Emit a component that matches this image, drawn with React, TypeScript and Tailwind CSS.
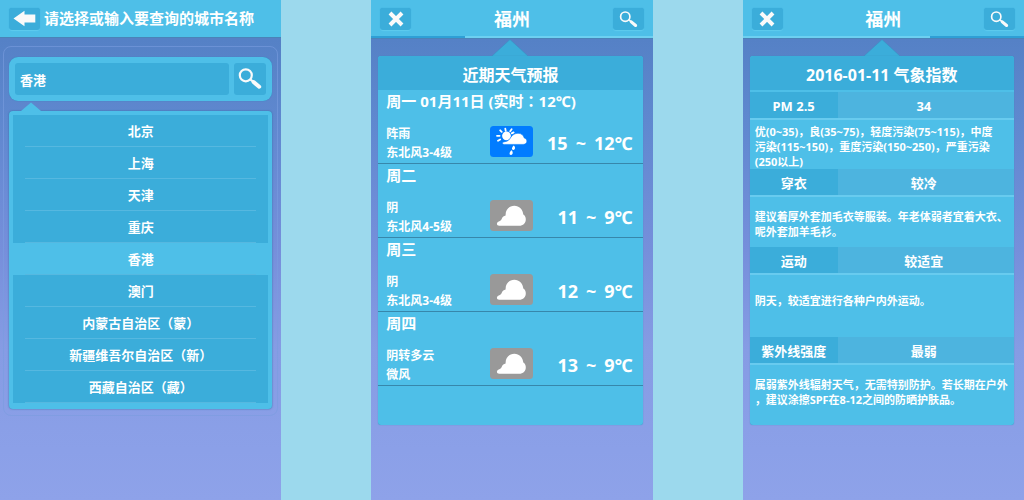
import type { ReactNode } from "react";

const cities = [
  "北京",
  "上海",
  "天津",
  "重庆",
  "香港",
  "澳门",
  "内蒙古自治区（蒙）",
  "新疆维吾尔自治区（新）",
  "西藏自治区（藏）",
];

type Day = { title: string; weather: string; wind: string; high: string; low: string; rain?: boolean };

const days: Day[] = [
  { title: "周一 01月11日 (实时：12℃)", weather: "阵雨", wind: "东北风3-4级", high: "15", low: "12℃", rain: true },
  { title: "周二", weather: "阴", wind: "东北风4-5级", high: "11", low: "9℃" },
  { title: "周三", weather: "阴", wind: "东北风3-4级", high: "12", low: "9℃" },
  { title: "周四", weather: "阴转多云", wind: "微风", high: "13", low: "9℃" },
];

type Index = { label: string; value: string; lines: string[]; space: string };

const indices: Index[] = [
  {
    label: "PM 2.5",
    value: "34",
    lines: ["优(0~35)，良(35~75)，轻度污染(75~115)，中度", "污染(115~150)，重度污染(150~250)，严重污染", "(250以上)"],
    space: "pt-1",
  },
  {
    label: "穿衣",
    value: "较冷",
    lines: ["建议着厚外套加毛衣等服装。年老体弱者宜着大衣、", "呢外套加羊毛衫。"],
    space: "pt-3 pb-2",
  },
  { label: "运动", value: "较适宜", lines: ["阴天，较适宜进行各种户内外运动。"], space: "pt-[18px] pb-[29px]" },
  {
    label: "紫外线强度",
    value: "最弱",
    lines: ["属弱紫外线辐射天气，无需特别防护。若长期在户外", "，建议涂擦SPF在8-12之间的防晒护肤品。"],
    space: "pt-3 pb-[18px]",
  },
];

/* Sets full-width colons in the centre of their cell. */
function Centred({ text }: { text: string }) {
  return text.split(/(：)/).map((part, i) =>
    part === "：" ? (
      <span key={i} lang="zh-TW" className="font-['Noto_Sans_CJK_TC',sans-serif] leading-none">
        {part}
      </span>
    ) : (
      part
    ),
  );
}

function SearchIcon({ className }: { className: string }) {
  return (
    <svg viewBox="0 0 24 22" className={className} fill="none" stroke="#fafafa" aria-hidden="true">
      <circle cx="7.8" cy="7.3" r="6" strokeWidth="2.2" />
      <path d="M12 11.2l3.4 2.6" strokeWidth="2.2" />
      <path d="M15.6 14l5.6 4.7" strokeWidth="4" strokeLinecap="round" />
    </svg>
  );
}

function CrossIcon() {
  return (
    <svg viewBox="0 0 16 16" className="h-4 w-4" stroke="#fafafa" strokeWidth="4" aria-hidden="true">
      <path d="M2 2l12 12M14 2L2 14" />
    </svg>
  );
}

function BackIcon() {
  return (
    <svg viewBox="0 0 23 17" className="h-[17px] w-[23px]" fill="#fafafa" aria-hidden="true">
      <path d="M0.5 8.5L11.5 0.8V4.6H22.3V12.6H11.5V16.2Z" />
    </svg>
  );
}

function WeatherIcon({ rain }: { rain?: boolean }) {
  if (rain) {
    return (
      <svg viewBox="0 0 43 31" className="h-[31px] w-[43px]" role="img" aria-label="阵雨">
        <rect width="43" height="31" rx="3.5" fill="#017cff" />
        <circle cx="16.5" cy="9.8" r="4.4" fill="#fff" />
        <path
          d="M15.3 2.6l.4 2.2M21.6 3.200l-1.400 2M10.2 4.300l1.500 1.600M23.600 6.400l-1.800 1M7 9.800h2.600M8 14.800l2.200-1.400"
          stroke="#fff"
          strokeWidth="1.800"
          strokeLinecap="round"
        />
        <path
          d="M14.400 18.400c-2.400 0-2.600-2-.6-2.500 1.800-.3 3.300-.6 4.700-1.700 1-.8 1.500-1.800 2.400-3C22.600 8.800 25 7.300 28 7.300c3.300 0 5.500 1.800 6.200 4.600 1.700.6 2.700 1.700 2.700 3.200 0 2-1.500 3.300-3.700 3.300z"
          fill="#fff"
          stroke="#017cff"
          strokeWidth="0.6"
        />
        <path
          d="M23.800 19.600c1.600 1.200 1.800 4.200-.4 4.300-2.400 0-1.400-3 .4-4.300zM21.600 24.200c1.500 1.200 1.700 4.600-.6 4.700-2.400 0-1.400-3.300.6-4.700z"
          fill="#fff"
        />
      </svg>
    );
  }
  return (
    <svg viewBox="0 0 43 31" className="h-[31px] w-[43px]" role="img" aria-label="阴">
      <rect width="43" height="31" rx="3.5" fill="#999" />
      <path
        d="M9.300 25.800c-2.800 0-3.300-3.200-.6-4.300 2-.8 2.600-1.600 3.200-3 .8-1.700 1.800-2.400 3.700-2.900C15.300 9.800 19.200 5.700 24.300 5.700c5 0 8.600 3.600 9 8.800 1.600.9 2.500 2.600 2.500 4.800 0 4-2.700 6.500-6.600 6.500z"
        fill="#fff"
      />
    </svg>
  );
}

function IconButton({ label, children }: { label: string; children: ReactNode }) {
  return (
    <button
      type="button"
      aria-label={label}
      className="flex h-[22px] w-[31px] shrink-0 items-center justify-center rounded-[3px] bg-[#3badda] shadow-[0_1px_1px_#5fcbee,0_0_1px_#2f9fcf]"
    >
      {children}
    </button>
  );
}

function Phone({ children }: { children: ReactNode }) {
  return (
    <section className="flex min-h-screen flex-1 flex-col bg-[linear-gradient(#5581c6_0px,#5581c6_40px,#5f88cf_120px,#768fdb_250px,#869ce4_350px,#8ba0e8_450px,#8ea2e9_500px)]">
      {children}
    </section>
  );
}

function CityHeader({ active }: { active: "first" | "last" }) {
  return (
    <header className="border-b border-[#4a83b8] bg-[#4ebfe8]">
      <div className="flex h-9 items-center justify-between px-[9px] pt-0.5">
        <IconButton label="关闭">
          <CrossIcon />
        </IconButton>
        <h1 className="text-[18px] leading-6">福州</h1>
        <IconButton label="搜索">
          <SearchIcon className="h-[17px] w-[19px]" />
        </IconButton>
      </div>
      <div className="grid h-0.5 grid-cols-3">
        <span className={active === "first" ? "bg-[#2e9fd6]" : "bg-[#6dd0f1]"} />
        <span className="bg-[#6dd0f1]" />
        <span className={active === "last" ? "bg-[#2e9fd6]" : "bg-[#6dd0f1]"} />
      </div>
    </header>
  );
}

function Card({ title, children }: { title: string; children: ReactNode }) {
  return (
    <div className="flex flex-col pr-[10px] pl-[7px]">
      <svg viewBox="0 0 36 17" className="h-[17px] w-9 self-center" aria-hidden="true">
        <path d="M0 17L18 0.500L36 17Z" fill="#3badda" />
        <path d="M0 17L18 0.500L36 17" fill="none" stroke="#3d8fc4" strokeWidth="0.6" />
      </svg>
      <div className="min-h-[369px] rounded-[3px] bg-[#4ebfe8] shadow-[0_0_1px_#3a80b5]">
        <h2 className="flex h-[34px] items-center justify-center rounded-t-[3px] bg-[#3badda] pt-1 text-[16px]">
          {title}
        </h2>
        {children}
      </div>
    </div>
  );
}

function CityPicker() {
  return (
    <Phone>
      <header className="flex h-[38px] items-center gap-1 border-b border-[#4a83b8] bg-[#4ebfe8] pl-[9px]">
        <IconButton label="返回">
          <BackIcon />
        </IconButton>
        <h1 className="text-[15px] whitespace-nowrap">请选择或输入要查询的城市名称</h1>
      </header>
      <div className="mx-[3px] mt-2 rounded-lg border border-[#7a9ce0]/60 px-[5px] pt-[10px] pb-[6px]">
        <form className="flex gap-[5px] rounded-[9px] bg-[#4ebfe8] p-[6px] shadow-[0_0_1px_#2f7fb5]">
          <input
            aria-label="城市名称"
            defaultValue="香港"
            className="h-8 min-w-0 flex-1 rounded-[3px] bg-[#3badda] pl-[5px] text-[13px] outline-none"
          />
          <button
            type="button"
            aria-label="搜索"
            className="flex h-8 w-8 items-center justify-center rounded-[3px] bg-[#3badda]"
          >
            <SearchIcon className="h-[22px] w-6" />
          </button>
        </form>
        <svg viewBox="0 0 20 9" className="mt-px ml-3 block h-[9px] w-5" aria-hidden="true">
          <path d="M0 9L10 0.500L20 9Z" fill="#4ebfe8" />
        </svg>
        <ul className="rounded-[4px] bg-[#4ebfe8] px-1 pt-1 pb-[6px] shadow-[0_0_2px_#2f6fa5]">
          {cities.map((city) => (
            <li key={city} className={city === "香港" ? "bg-[#4ebfe8]" : "bg-[#3badda]"}>
              <button type="button" className="block w-full px-3 text-[13px]">
                <span className="block h-8 border-b border-[#56b8e0] leading-8">{city}</span>
              </button>
            </li>
          ))}
        </ul>
      </div>
    </Phone>
  );
}

function Forecast() {
  return (
    <Phone>
      <CityHeader active="first" />
      <Card title="近期天气预报">
        {days.map((day) => (
          <article key={day.title} className="h-[74px] border-b border-[#3787ab] pr-[10px] pl-2">
            <h3 className="h-[34px] text-[15px] leading-[23px]">
              <Centred text={day.title} />
            </h3>
            <div className="flex items-start">
              <div className="w-[104px] text-[12px] leading-[19px]">
                <p>{day.weather}</p>
                <p>{day.wind}</p>
              </div>
              <div className="pt-0.5">
                <WeatherIcon rain={day.rain} />
              </div>
              <p className="flex flex-1 justify-end gap-2 text-[18px] leading-[38px] whitespace-nowrap">
                <span>{day.high}</span>
                <span>~</span>
                <span>{day.low}</span>
              </p>
            </div>
          </article>
        ))}
      </Card>
    </Phone>
  );
}

function WeatherIndex() {
  return (
    <Phone>
      <CityHeader active="last" />
      <Card title="2016-01-11 气象指数">
        <div className="pt-0.5">
          {indices.map((item) => (
            <article key={item.label}>
              <div className="flex h-7 border-b-2 border-[#68cbef] text-[13px] leading-[28px]">
                <h3 className="w-[88px] bg-[#3badda] text-center">{item.label}</h3>
                <p className="flex-1 bg-[#4db4df] pr-1 text-center">{item.value}</p>
              </div>
              <p className={`pl-[5px] text-[11px] leading-[15px] whitespace-nowrap ${item.space}`}>
                {item.lines.map((line) => (
                  <span key={line} className="block">
                    {line}
                  </span>
                ))}
              </p>
            </article>
          ))}
        </div>
      </Card>
    </Phone>
  );
}

export default function App() {
  return (
    <main
      lang="zh-CN"
      className="flex min-h-screen gap-[90px] bg-[#9cd9ed] font-['Noto_Sans','Noto_Sans_CJK_SC',sans-serif] font-bold text-white"
    >
      <CityPicker />
      <Forecast />
      <WeatherIndex />
    </main>
  );
}
